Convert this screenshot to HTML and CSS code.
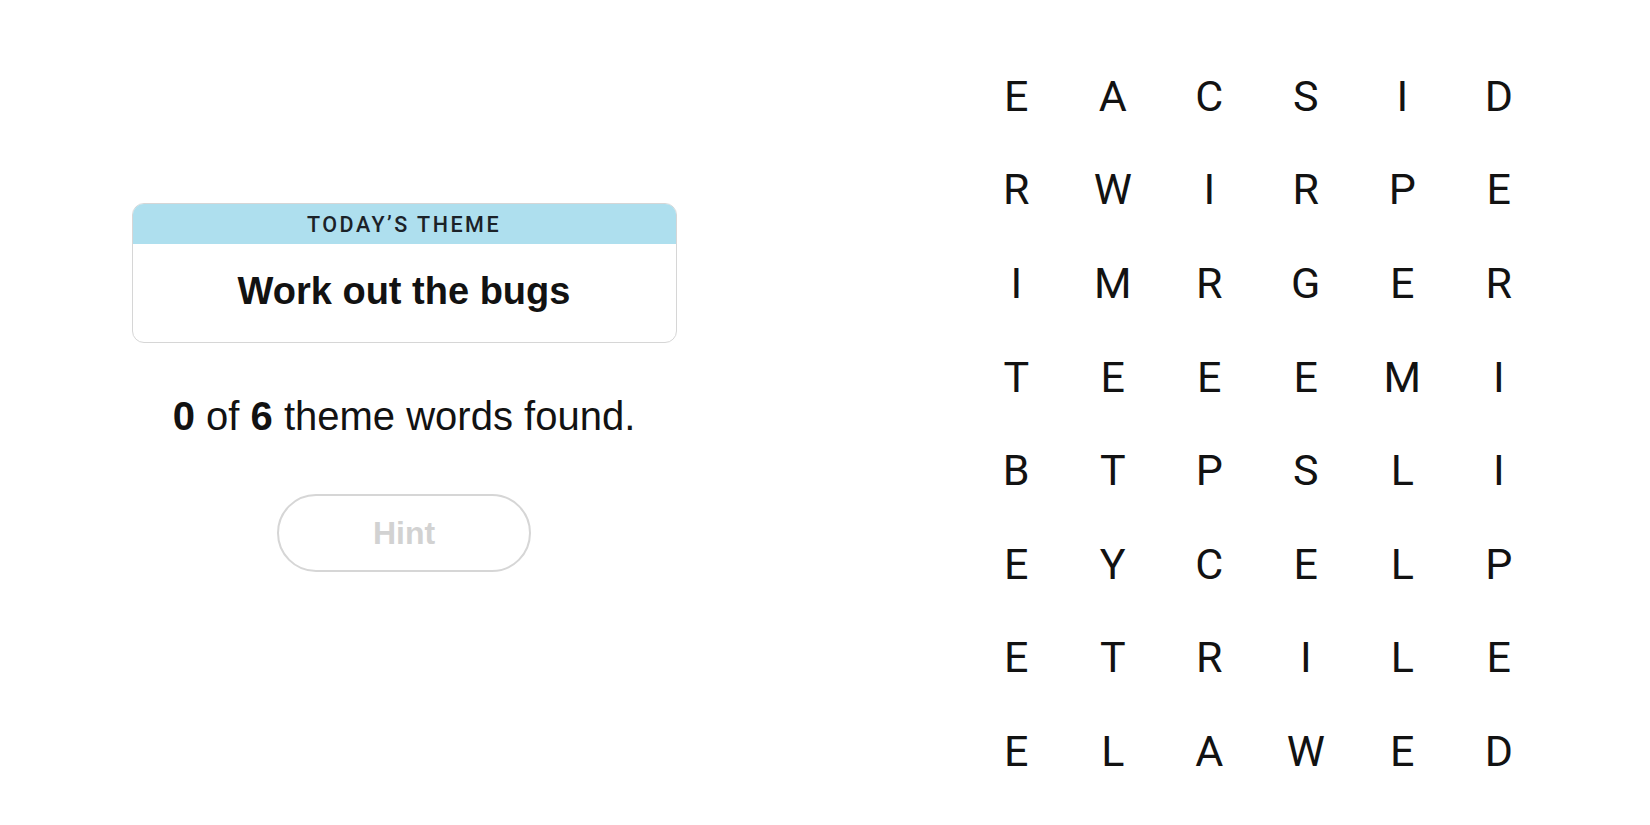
FILE: index.html
```html
<!DOCTYPE html>
<html lang="en">
<head>
<meta charset="utf-8">
<title>Strands</title>
<link rel="stylesheet" href="styles.css">
</head>
<body>
<main class="page">
  <section class="left">
    <div class="card">
      <div class="card-head">TODAY’S THEME</div>
      <div class="card-body">Work out the bugs</div>
    </div>
    <p class="progress"><b>0</b> of <b>6</b> theme words found.</p>
    <button class="hint" type="button">Hint</button>
  </section>
  <section class="right">
    <div class="board">
      <span class="cell">E</span><span class="cell">A</span><span class="cell">C</span><span class="cell">S</span><span class="cell">I</span><span class="cell">D</span>
      <span class="cell">R</span><span class="cell">W</span><span class="cell">I</span><span class="cell">R</span><span class="cell">P</span><span class="cell">E</span>
      <span class="cell">I</span><span class="cell">M</span><span class="cell">R</span><span class="cell">G</span><span class="cell">E</span><span class="cell">R</span>
      <span class="cell">T</span><span class="cell">E</span><span class="cell">E</span><span class="cell">E</span><span class="cell">M</span><span class="cell">I</span>
      <span class="cell">B</span><span class="cell">T</span><span class="cell">P</span><span class="cell">S</span><span class="cell">L</span><span class="cell">I</span>
      <span class="cell">E</span><span class="cell">Y</span><span class="cell">C</span><span class="cell">E</span><span class="cell">L</span><span class="cell">P</span>
      <span class="cell">E</span><span class="cell">T</span><span class="cell">R</span><span class="cell">I</span><span class="cell">L</span><span class="cell">E</span>
      <span class="cell">E</span><span class="cell">L</span><span class="cell">A</span><span class="cell">W</span><span class="cell">E</span><span class="cell">D</span>
    </div>
  </section>
</main>
</body>
</html>
```

FILE: styles.css
```css
* {
  box-sizing: border-box;
}

html, body {
  margin: 0;
  padding: 0;
  background: #ffffff;
}

body {
  font-family: "Liberation Sans", Arial, sans-serif;
  color: #121212;
  width: 1650px;
  height: 825px;
  overflow: hidden;
}

.page {
  display: flex;
  height: 825px;
}

.left {
  width: 808px;
  display: flex;
  flex-direction: column;
  align-items: center;
  padding-top: 203px;
}

.card {
  width: 545px;
  border: 1px solid #d6d6d6;
  border-radius: 12px;
  overflow: hidden;
}

.card-head {
  height: 40px;
  background: #aedfee;
  display: flex;
  align-items: center;
  justify-content: center;
  padding-top: 1px;
  font-family: Roboto, "Liberation Sans", sans-serif;
  font-size: 21.5px;
  font-weight: 500;
  letter-spacing: 2.5px;
  color: #1b2228;
}

.card-body {
  height: 98px;
  display: flex;
  align-items: center;
  justify-content: center;
  padding-bottom: 4px;
  font-size: 38px;
  font-weight: 700;
  color: #121212;
}

.progress {
  margin: 49px 0 0;
  font-size: 40px;
  line-height: 48px;
  color: #121212;
}

.progress b {
  font-weight: 700;
}

.hint {
  margin-top: 54px;
  width: 254px;
  height: 78px;
  border: 2px solid #d6d6d6;
  border-radius: 39px;
  background: #ffffff;
  font-family: "Liberation Sans", Arial, sans-serif;
  font-size: 32px;
  font-weight: 700;
  color: #d2d2d2;
  padding: 0;
}

.right {
  flex: 1;
  padding-left: 160px;
  padding-top: 49px;
}

.board {
  display: grid;
  grid-template-columns: repeat(6, 96.5px);
  grid-auto-rows: 93.6px;
}

.cell {
  display: flex;
  align-items: center;
  justify-content: center;
  font-family: Roboto, "Liberation Sans", sans-serif;
  font-size: 43px;
  font-weight: 400;
  color: #121212;
}
```
